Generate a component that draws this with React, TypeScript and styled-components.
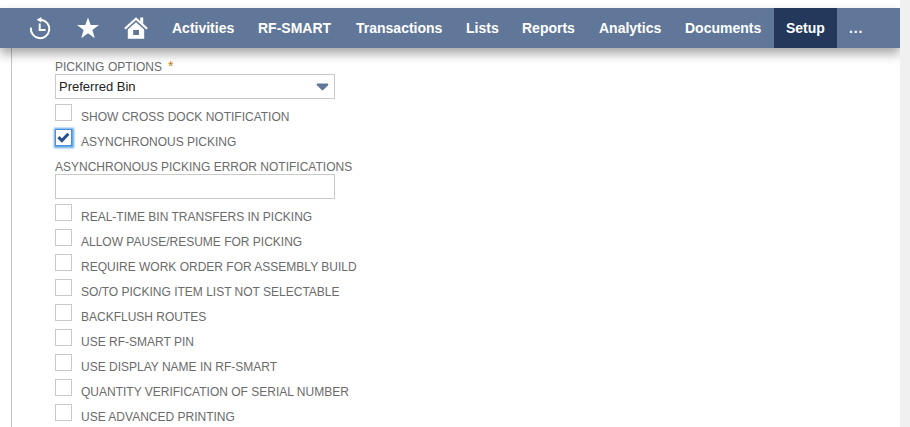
import React from 'react';
import styled, { createGlobalStyle, css } from 'styled-components';

const Global = createGlobalStyle`
  * { box-sizing: border-box; }
  html, body { margin: 0; padding: 0; overflow: hidden; background: #fff; }
  body { font-family: "Liberation Sans", Arial, sans-serif; }
`;

const Page = styled.div`
  display: grid;
  grid-template-columns: 900px 10px;
  width: 910px;
  height: 427px;
  overflow: hidden;
`;

const Main = styled.main`
  display: flex;
  flex-direction: column;
  overflow: hidden;
  padding-top: 8px;
`;

const ScrollTrack = styled.div`
  background: #f0f0f0;
`;

const NavBar = styled.nav`
  position: relative;
  z-index: 1;
  display: flex;
  flex: none;
  height: 40px;
  padding-left: 16px;
  background: #607799;
  box-shadow: 0 6px 10px rgba(0, 0, 0, 0.34);
`;

const IconLink = styled.a`
  display: flex;
  align-items: center;
  justify-content: center;
  width: 48px;
  height: 40px;
`;

const NavLink = styled.a<{ $width: number; $active?: boolean }>`
  width: ${(p) => p.$width}px;
  height: 40px;
  padding-left: 12px;
  color: #fff;
  font-size: 14px;
  font-weight: bold;
  line-height: 40px;
  white-space: nowrap;
  ${(p) => p.$active && css`background: #24385b;`}
`;

const Overflow = styled(NavLink)`
  letter-spacing: 0.8px;
`;

const Form = styled.form`
  flex: 1;
  margin-left: 11px;
  padding: 1px 0 0 43px;
  border-left: 1px solid #c4c4c4;
`;

const labelType = css`
  display: flex;
  height: 25px;
  padding-top: 5px;
  color: #6b6b6b;
  font-size: 12px;
  line-height: 27px;
  white-space: nowrap;
`;

const FieldLabel = styled.div`
  ${labelType}
`;

const CheckRow = styled.label`
  ${labelType}
`;

const LabelText = styled.span<{ $width: number }>`
  width: ${(p) => p.$width}px;
  text-align-last: justify;
  white-space: nowrap;
`;

const Required = styled.span`
  margin-left: 6px;
  color: #c07f10;
  font-size: 14px;
  line-height: 24px;
`;

const Box = styled.div`
  display: flex;
  align-items: center;
  justify-content: space-between;
  width: 280px;
  height: 25px;
  padding: 0 5px 0 3px;
  border: 1px solid #c9c9c9;
  color: #222;
  font-size: 13px;
  line-height: 23px;
`;

const CheckBox = styled.span<{ $checked?: boolean }>`
  flex: none;
  display: flex;
  align-items: center;
  justify-content: center;
  width: 17px;
  height: 17px;
  margin-right: 9px;
  border: 1px solid #c9c9c9;
  background: #fff;
  ${(p) =>
    p.$checked &&
    css`
      border-color: #4b8fd8;
      box-shadow: 0 0 2px 1.5px #5da4e8;
    `}
`;

const HistoryIcon = () => (
  <svg width="24" height="24" viewBox="0 0 24 24" fill="none" stroke="#fff">
    <path d="M3 11.6A9.2 9.2 0 1 0 13 3.8" strokeWidth="2" />
    <path d="M8.6 3.8L13.4 1V6.6Z" fill="#fff" stroke="none" />
    <path d="M11.7 7.4V14H17.6" strokeWidth="2" />
  </svg>
);

const StarIcon = () => (
  <svg width="24" height="24" viewBox="0 0 24 24" fill="#fff">
    <path d="M12 1.5L14.7 9.1H23L16.4 14L18.8 22.2L12 17.3L5.2 22.2L7.6 14L1 9.1H9.3Z" />
  </svg>
);

const HomeIcon = () => (
  <svg width="24" height="24" viewBox="0 0 24 24">
    <path d="M0.9 12.8L12 2.8L23.1 12.8" fill="none" stroke="#fff" strokeWidth="2.2" />
    <path d="M16.2 1.5H19.2V8L16.2 5Z" fill="#fff" />
    <path fillRule="evenodd" d="M12 6.3L20.2 13.6V22.7H3.8V13.6ZM9.2 14V19H15V14Z" fill="#fff" />
  </svg>
);

const ArrowIcon = () => (
  <svg width="13" height="8" viewBox="0 0 13 8">
    <path d="M1.3 .5H11.7Q13 1 12 2.3L7.6 6.8Q6.5 7.8 5.4 6.8L1 2.3Q0 1 1.3 .5Z" fill="#607799" />
  </svg>
);

const CheckIcon = () => (
  <svg width="13" height="13" viewBox="0 0 13 13">
    <path d="M1.4 6.2L4.9 9.6L11.4 2.8" fill="none" stroke="#24508f" strokeWidth="3" />
  </svg>
);

const navItems = [
  { label: 'Activities', width: 86 },
  { label: 'RF-SMART', width: 98 },
  { label: 'Transactions', width: 110 },
  { label: 'Lists', width: 56 },
  { label: 'Reports', width: 77 },
  { label: 'Analytics', width: 86 },
  { label: 'Documents', width: 101 },
  { label: 'Setup', width: 63, active: true },
];

type Option = { label: string; width: number; checked?: boolean };

const notificationOptions: Option[] = [
  { label: 'SHOW CROSS DOCK NOTIFICATION', width: 208 },
  { label: 'ASYNCHRONOUS PICKING', width: 155, checked: true },
];

const pickingOptions: Option[] = [
  { label: 'REAL-TIME BIN TRANSFERS IN PICKING', width: 231 },
  { label: 'ALLOW PAUSE/RESUME FOR PICKING', width: 221 },
  { label: 'REQUIRE WORK ORDER FOR ASSEMBLY BUILD', width: 275 },
  { label: 'SO/TO PICKING ITEM LIST NOT SELECTABLE', width: 258 },
  { label: 'BACKFLUSH ROUTES', width: 125 },
  { label: 'USE RF-SMART PIN', width: 112 },
  { label: 'USE DISPLAY NAME IN RF-SMART', width: 195 },
  { label: 'QUANTITY VERIFICATION OF SERIAL NUMBER', width: 267 },
  { label: 'USE ADVANCED PRINTING', width: 153 },
];

const OptionRow = ({ label, width, checked }: Option) => (
  <CheckRow>
    <CheckBox $checked={checked}>{checked && <CheckIcon />}</CheckBox>
    <LabelText $width={width}>{label}</LabelText>
  </CheckRow>
);

export default function App() {
  return (
    <>
      <Global />
      <Page>
        <Main>
          <NavBar>
            <IconLink><HistoryIcon /></IconLink>
            <IconLink><StarIcon /></IconLink>
            <IconLink><HomeIcon /></IconLink>
            {navItems.map((item) => (
              <NavLink key={item.label} $width={item.width} $active={item.active}>
                {item.label}
              </NavLink>
            ))}
            <Overflow $width={40}>...</Overflow>
          </NavBar>
          <Form>
            <FieldLabel>
              <LabelText $width={107}>PICKING OPTIONS</LabelText>
              <Required>*</Required>
            </FieldLabel>
            <Box>
              Preferred Bin
              <ArrowIcon />
            </Box>
            {notificationOptions.map((o) => <OptionRow key={o.label} {...o} />)}
            <FieldLabel>
              <LabelText $width={297}>ASYNCHRONOUS PICKING ERROR NOTIFICATIONS</LabelText>
            </FieldLabel>
            <Box />
            {pickingOptions.map((o) => <OptionRow key={o.label} {...o} />)}
          </Form>
        </Main>
        <ScrollTrack />
      </Page>
    </>
  );
}
